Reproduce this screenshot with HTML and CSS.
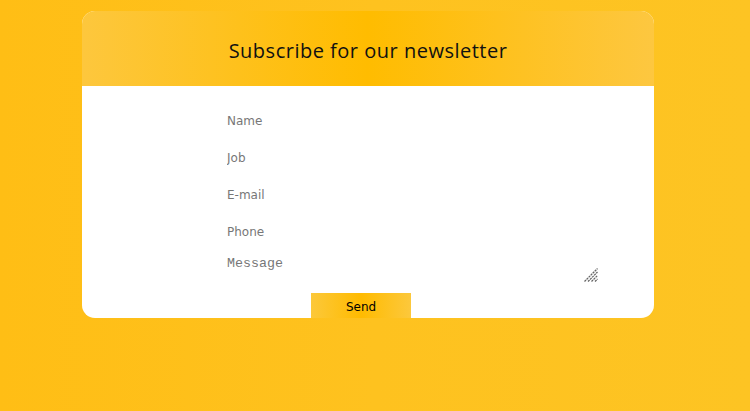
FILE: index.html
```html
<!DOCTYPE html>
<html lang="en">
<head>
<meta charset="utf-8">
<title>Subscribe</title>
<link rel="stylesheet" href="styles.css">
</head>
<body>
<div class="card">
  <div class="card-header">
    <h1 class="title">Subscribe for our newsletter</h1>
  </div>
  <form class="form">
    <input class="field" type="text" placeholder="Name">
    <input class="field" type="text" placeholder="Job">
    <input class="field" type="text" placeholder="E-mail">
    <input class="field" type="text" placeholder="Phone">
    <div class="message-wrap">
      <textarea class="message" placeholder="Message"></textarea>
      <svg class="resizer" width="14" height="14" viewBox="0 0 14 14" aria-hidden="true">
        <g stroke="#666" stroke-width="1.3" stroke-dasharray="2.2 0.7">
          <line x1="0.5" y1="13.5" x2="13.5" y2="0.5"/>
          <line x1="4" y1="13.5" x2="13.5" y2="4"/>
          <line x1="7.5" y1="13.5" x2="13.5" y2="7.5"/>
          <line x1="11" y1="13.5" x2="13.5" y2="11"/>
        </g>
      </svg>
    </div>
    <button class="send" type="button">Send</button>
  </form>
</div>
</body>
</html>
```

FILE: styles.css
```css
html, body {
  margin: 0;
  padding: 0;
}
body {
  width: 750px;
  height: 411px;
  background: linear-gradient(90deg, #ffbe15 0%, #fec21f 50%, #fdc423 100%);
  font-family: "DejaVu Sans", Verdana, sans-serif;
  overflow: hidden;
}
.card {
  width: 572px;
  margin: 11px 0 0 82px;
  background: #ffffff;
  border-radius: 13px;
  overflow: hidden;
}
.card-header {
  height: 75px;
  box-sizing: border-box;
  padding-top: 4px;
  display: flex;
  align-items: center;
  justify-content: center;
  background: linear-gradient(90deg, #fdc73d 0%, #ffbc00 50%, #fdc740 100%);
}
.title {
  margin: 0;
  font-family: "Open Sans", sans-serif;
  font-weight: 400;
  font-size: 20px;
  color: #111;
  letter-spacing: 0.5px;
}
.form {
  display: flex;
  flex-direction: column;
  align-items: flex-start;
  padding: 16px 0 0 142px;
}
.field {
  border: 0;
  outline: none;
  height: 37px;
  width: 300px;
  padding: 0 3px;
  margin: 0;
  font-family: "DejaVu Sans", Verdana, sans-serif;
  font-size: 12px;
  background: transparent;
}
.field::placeholder {
  color: #777;
}
.message-wrap {
  position: relative;
  width: 376px;
  height: 36px;
}
.message {
  display: block;
  border: 0;
  outline: none;
  margin: 0;
  width: 100%;
  height: 100%;
  padding: 6px 3px 2px;
  box-sizing: border-box;
  resize: none;
  font-family: "Liberation Mono", "Courier New", monospace;
  font-size: 13.33px;
  background: transparent;
}
.message::placeholder {
  color: #777;
}
.resizer {
  position: absolute;
  right: 2px;
  bottom: 4px;
  pointer-events: none;
}
.send {
  margin: 7px 0 0 87px;
  width: 100px;
  height: 25px;
  border: 0;
  padding: 2px 0 0;
  font-family: "DejaVu Sans", Verdana, sans-serif;
  font-size: 12px;
  color: #000;
  background: linear-gradient(90deg, #fcc83a 0%, #ffbb00 50%, #fcc83c 100%);
}
```
